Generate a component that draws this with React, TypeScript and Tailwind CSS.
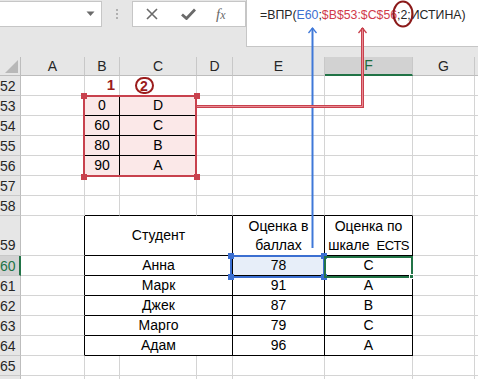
import React from "react";

const FONT = { fontFamily: '"Liberation Sans", Arial, sans-serif' };

type Col = { key: string; w: number; label: string };
const COLS: Col[] = [
  { key: "A", w: 64, label: "A" },
  { key: "B", w: 35, label: "B" },
  { key: "C", w: 77, label: "C" },
  { key: "D", w: 36, label: "D" },
  { key: "E", w: 92, label: "E" },
  { key: "F", w: 88, label: "F" },
  { key: "G", w: 62, label: "G" },
  { key: "H", w: 40, label: "" },
];

const GRID = "border-[#d4d4d4]";

function RowHeader({
  n,
  h = 20,
  active = false,
  bottom = false,
}: {
  n?: number;
  h?: number;
  active?: boolean;
  bottom?: boolean;
}) {
  return (
    <div
      className={
        "shrink-0 w-[21px] flex pl-0 border-b border-[#c8c8c8] text-[14px] leading-[20px] " +
        (bottom ? "items-end " : "items-center ") +
        (active
          ? "bg-[#d2d2d2] text-[#217346] border-r-2 border-r-[#217346]"
          : "bg-[#e6e6e6] text-[#262626] border-r border-r-[#bdbdbd]")
      }
      style={{ height: h }}
    >
      {n !== undefined && <span className="leading-[20px]">{n}</span>}
    </div>
  );
}

function Cell({
  w,
  children,
  className = "",
}: {
  w: number;
  children?: React.ReactNode;
  className?: string;
}) {
  return (
    <div
      className={"shrink-0 h-full flex items-center justify-center text-[14px] text-black border-r border-b " + className}
      style={{ width: w }}
    >
      {children}
    </div>
  );
}

function EmptyRow({ n, blackBottom = false }: { n?: number; blackBottom?: boolean }) {
  return (
    <div className="flex h-[20px]">
      <RowHeader n={n} />
      {COLS.map((c) => {
        const inTable = ["B", "C", "D", "E", "F"].includes(c.key);
        return (
          <Cell
            key={c.key}
            w={c.w}
            className={GRID + (blackBottom && inTable ? " border-b-black" : "")}
          />
        );
      })}
    </div>
  );
}

// B53:C56 lookup range
const LOOKUP: [string, string][] = [
  ["0", "D"],
  ["60", "C"],
  ["80", "B"],
  ["90", "A"],
];

const STUDENTS: [string, string, string][] = [
  ["Анна", "78", "C"],
  ["Марк", "91", "A"],
  ["Джек", "87", "B"],
  ["Марго", "79", "C"],
  ["Адам", "96", "A"],
];

function Handle({ x, y, color }: { x: number; y: number; color: string }) {
  return <div className="absolute w-[6px] h-[6px]" style={{ left: x, top: y, background: color }} />;
}

export default function App() {
  return (
    <div className="relative w-[478px] h-[379px] overflow-hidden bg-white" style={FONT}>
      {/* formula bar */}
      <div className="flex items-start h-[57px] bg-[#e6e6e6]">
        <div className="mt-px h-[26px] w-[102px] bg-white border-y border-r border-[#c6c6c6] flex items-center justify-end pr-[6px]">
          <svg width="9" height="6" viewBox="0 0 9 6">
            <path d="M0.5 0.5 L8.5 0.5 L4.5 5 Z" fill="#6a6a6a" />
          </svg>
        </div>
        <div className="w-[30px] h-[28px] flex flex-col items-center justify-center gap-[2px]">
          <span className="w-[2px] h-[2px] bg-[#b0b0b0]" />
          <span className="w-[2px] h-[2px] bg-[#b0b0b0]" />
          <span className="w-[2px] h-[2px] bg-[#b0b0b0]" />
        </div>
        <div className="mt-px h-[26px] w-[114px] bg-white border border-[#c6c6c6] flex items-center">
          <svg className="ml-[13px]" width="12" height="12" viewBox="0 0 12 12">
            <path d="M1 1 L11 11 M11 1 L1 11" stroke="#6a6a6a" strokeWidth="1.6" />
          </svg>
          <svg className="ml-[23px]" width="15" height="12" viewBox="0 0 15 12">
            <path d="M1 6.5 L5.5 10.5 L14 1.5" stroke="#6a6a6a" strokeWidth="2.8" fill="none" />
          </svg>
          <span
            className="ml-[20px] text-[15px] italic text-[#6a6a6a] leading-none"
            style={{ fontFamily: '"Liberation Serif", serif' }}
          >
            f<span className="text-[12px]">x</span>
          </span>
        </div>
        <div className="flex-1 h-[47px] bg-white border-l border-b border-[#c6c6c6] pl-[13px] pt-[6px] text-[12.3px] leading-[18px] text-[#262626] whitespace-nowrap">
          =ВПР(<span className="text-[#3b6fd1]">E60</span>;<span className="text-[#d13a4a]">$B$53:$C$56</span>;2;ИСТИНА)
        </div>
      </div>

      {/* column headers */}
      <div className="flex h-[19px] bg-[#e6e6e6]">
        <div className="shrink-0 w-[21px] h-full border-r border-b border-[#bdbdbd] relative">
          <svg className="absolute right-[2px] bottom-[2px]" width="13" height="13" viewBox="0 0 13 13">
            <path d="M13 0 L13 13 L0 13 Z" fill="#b8b8b8" />
          </svg>
        </div>
        {COLS.map((c) => (
          <div
            key={c.key}
            className={
              "shrink-0 h-full flex items-center justify-center text-[14px] border-r border-r-[#c8c8c8] " +
              (c.key === "F"
                ? "bg-[#d2d2d2] text-[#1e6b3d] border-b-2 border-b-[#217346]"
                : "text-[#262626] border-b border-b-[#bdbdbd]")
            }
            style={{ width: c.w }}
          >
            {c.label}
          </div>
        ))}
      </div>

      {/* row 52 */}
      <div className="flex h-[20px]">
        <RowHeader n={52} />
        <Cell w={64} className={GRID} />
        <Cell w={35} className={GRID + " !justify-end pr-[4px]"}>
          <span className="font-bold text-[#9b1c1c] text-[15px]">1</span>
        </Cell>
        <Cell w={77} className={GRID}>
          <span className="w-[19px] h-[17px] rounded-full border-2 border-[#9b1c1c] flex items-center justify-center font-bold text-[#9b1c1c] text-[14px] leading-none -ml-[28px]">
            2
          </span>
        </Cell>
        <Cell w={36} className={GRID} />
        <Cell w={92} className={GRID} />
        <Cell w={88} className={GRID} />
        <Cell w={62} className={GRID} />
        <Cell w={40} className={GRID} />
      </div>

      {/* rows 53-56: lookup range */}
      {LOOKUP.map(([score, grade], i) => (
        <div key={score} className="flex h-[20px]">
          <RowHeader n={53 + i} />
          <Cell w={64} className={GRID} />
          <Cell w={35} className="bg-[#fbe8e8] border-black">
            {score}
          </Cell>
          <Cell w={77} className="bg-[#fbe8e8] border-r-[#d4d4d4] border-b-black">
            {grade}
          </Cell>
          <Cell w={36} className={GRID} />
          <Cell w={92} className={GRID} />
          <Cell w={88} className={GRID} />
          <Cell w={62} className={GRID} />
          <Cell w={40} className={GRID} />
        </div>
      ))}

      <EmptyRow n={57} />
      <EmptyRow n={58} blackBottom />

      {/* row 59: table heading */}
      <div className="flex h-[40px]">
        <RowHeader n={59} h={40} bottom />
        <Cell w={64} className="border-[#d4d4d4] border-r-black" />
        <Cell w={148} className="border-black">
          Студент
        </Cell>
        <Cell w={92} className="border-black text-center leading-[19px]">
          <span>
            Оценка в
            <br />
            баллах
          </span>
        </Cell>
        <Cell w={88} className="border-black text-center leading-[19px]">
          <span className="whitespace-nowrap">
            Оценка по
            <br />
            шкале<span className="inline-block w-[7px]" />
            <span className="text-[13px] tracking-[-0.6px]">ECTS</span>
          </span>
        </Cell>
        <Cell w={62} className={GRID} />
        <Cell w={40} className={GRID} />
      </div>

      {/* rows 60-64: students */}
      {STUDENTS.map(([name, pts, ects], i) => (
        <div key={name} className="flex h-[20px]">
          <RowHeader n={60 + i} active={i === 0} />
          <Cell w={64} className="border-[#d4d4d4] border-r-black" />
          <Cell w={148} className="border-black">
            {name}
          </Cell>
          <Cell w={92} className={"border-black " + (i === 0 ? "bg-[#e7eef9]" : "")}>
            {pts}
          </Cell>
          <Cell w={88} className="border-black">
            {ects}
          </Cell>
          <Cell w={62} className={GRID} />
          <Cell w={40} className={GRID} />
        </div>
      ))}

      <EmptyRow n={65} />
      <EmptyRow />

      {/* selection of the lookup range */}
      <div className="absolute left-[83px] top-[95px] w-[114px] h-[82px] border-2 border-[#c8414d]" />
      <Handle x={81} y={93} color="#c8414d" />
      <Handle x={194} y={93} color="#c8414d" />
      <Handle x={81} y={174} color="#c8414d" />
      <Handle x={194} y={174} color="#c8414d" />

      {/* E60 reference */}
      <div className="absolute left-[230px] top-[255px] w-[95px] h-[23px] border-2 border-[#3b6fd1]" />
      <Handle x={228} y={253} color="#3b6fd1" />
      <Handle x={228} y={274} color="#3b6fd1" />
      <Handle x={321} y={253} color="#3b6fd1" />
      <Handle x={321} y={274} color="#3b6fd1" />

      {/* active cell F60 */}
      <div className="absolute left-[324px] top-[256px] w-[89px] h-[22px] border-2 border-[#217346]" />
      <div className="absolute left-[409px] top-[274px] w-[5px] h-[5px] bg-[#217346] border border-white" />

      {/* arrows from formula arguments */}
      <svg className="absolute left-0 top-0 pointer-events-none" width="478" height="379" viewBox="0 0 478 379">
        <line x1="312.5" y1="28" x2="312.5" y2="248" stroke="#3f78d8" strokeWidth="2" />
        <polyline points="308.5,33 312.5,28 316.5,33" fill="none" stroke="#3f78d8" strokeWidth="1.3" />
        <polyline points="197,106.5 362.5,106.5 362.5,28" fill="none" stroke="#c8414d" strokeWidth="3" />
        <polyline points="197,106.5 362.5,106.5 362.5,28" fill="none" stroke="#e88a94" strokeWidth="1" />
        <polyline points="358.5,33 362.5,28 366.5,33" fill="none" stroke="#c8414d" strokeWidth="1.3" />
        <ellipse cx="403" cy="14" rx="9.5" ry="12.5" fill="none" stroke="#8b1a1a" strokeWidth="2" />
      </svg>
    </div>
  );
}
